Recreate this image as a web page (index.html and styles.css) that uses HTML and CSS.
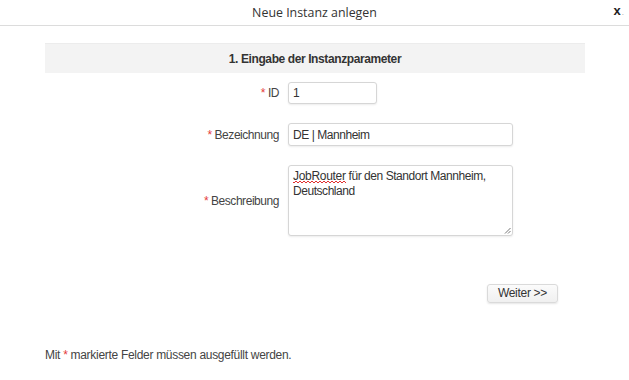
FILE: index.html
```html
<!DOCTYPE html>
<html lang="de">
<head>
<meta charset="utf-8">
<title>Neue Instanz anlegen</title>
<link rel="stylesheet" href="styles.css">
</head>
<body>
<div class="dialog">
  <header class="dlg-head">
    <span class="dlg-title">Neue Instanz anlegen</span>
    <span class="dlg-close">x<span class="dot">.</span></span>
  </header>
  <main class="dlg-body">
    <div class="section-head">1. Eingabe der Instanzparameter</div>
    <form class="form">
      <label class="lbl" for="f-id"><span class="req">*</span> ID</label>
      <div class="ctl"><input id="f-id" class="inp inp-short" type="text" value="1"></div>
      <label class="lbl" for="f-name"><span class="req">*</span> Bezeichnung</label>
      <div class="ctl"><input id="f-name" class="inp inp-long" type="text" value="DE | Mannheim"></div>
      <label class="lbl"><span class="req">*</span> Beschreibung</label>
      <div class="ctl">
        <div class="txt" role="textbox" aria-multiline="true"><span class="spell">JobRouter</span><span> für den Standort Mannheim,</span><br><span>Deutschland</span><svg class="grip" width="7" height="7" viewBox="0 0 7 7"><path d="M6.5 1 L1 6.5 M6.5 4 L4 6.5" stroke="#777" stroke-width="1" fill="none"/></svg></div>
      </div>
    </form>
    <div class="actions"><button class="btn" type="button">Weiter &gt;&gt;</button></div>
    <p class="note">Mit <span class="req">*</span> markierte Felder müssen ausgefüllt werden.</p>
  </main>
</div>
</body>
</html>
```
FILE: styles.css
```css
html, body {
  margin: 0;
  padding: 0;
  background: #fff;
}
body {
  font-family: "Liberation Sans", Arial, sans-serif;
  color: #333;
  width: 629px;
  height: 380px;
  overflow: hidden;
}
.dlg-head {
  height: 25px;
  border-bottom: 1px solid #dcdcdc;
  display: flex;
  align-items: center;
  justify-content: center;
  position: relative;
}
.dlg-title {
  font-family: "Open Sans", sans-serif;
  font-size: 12.4px;
  color: #333;
  line-height: 25px;
}
.dlg-close {
  position: absolute;
  right: 5px;
  top: 3px;
  font-family: "Liberation Sans", Arial, sans-serif;
  font-size: 13px;
  font-weight: bold;
  color: #222;
  line-height: 16px;
}
.dlg-close .dot {
  font-size: 8px;
  font-weight: normal;
  color: #999;
  margin-left: 1px;
}
.dlg-body {
  padding: 17px 44px 0 45px;
}
.section-head {
  height: 30px;
  background: #f3f3f3;
  border-top: 1px solid #ececec;
  box-sizing: border-box;
  display: flex;
  align-items: center;
  justify-content: center;
  font-size: 12px;
  font-weight: bold;
  letter-spacing: -0.4px;
  color: #333;
}
.form {
  margin: 9px 0 0 0;
  display: grid;
  grid-template-columns: 234px auto;
  column-gap: 9px;
  row-gap: 19px;
  align-items: center;
}
.lbl {
  justify-self: end;
  font-size: 12px;
  letter-spacing: -0.45px;
  color: #444;
}
.req {
  color: #e43b3b;
}
.ctl {
  display: flex;
}
.inp, .txt {
  font-family: "Liberation Sans", Arial, sans-serif;
  font-size: 12px;
  letter-spacing: -0.45px;
  color: #333;
  border: 1px solid #d6d6d6;
  border-radius: 3px;
  box-shadow: 0 1px 2px rgba(0,0,0,0.08);
  box-sizing: border-box;
  padding: 0 4px;
  margin: 0;
  background: #fff;
  outline: none;
}
.inp-short {
  width: 89px;
  height: 22px;
}
.inp-long {
  width: 225px;
  height: 23px;
}
.txt {
  position: relative;
  width: 225px;
  height: 71px;
  padding: 3px 4px;
  line-height: 15px;
}
.spell {
  letter-spacing: -0.3px;
  background-image:
    linear-gradient(135deg, transparent 40%, #e03030 40%, #e03030 60%, transparent 60%),
    linear-gradient(45deg, transparent 40%, #e03030 40%, #e03030 60%, transparent 60%);
  background-size: 4px 2px;
  background-position: 0 100%, 2px 100%;
  background-repeat: repeat-x;
}
.grip {
  position: absolute;
  right: 1px;
  bottom: 1px;
}
.actions {
  display: flex;
  justify-content: flex-end;
  padding-right: 27px;
  margin-top: 48px;
}
.btn {
  width: 71px;
  height: 19px;
  font-family: "Liberation Sans", Arial, sans-serif;
  font-size: 12px;
  letter-spacing: -0.3px;
  color: #333;
  background: linear-gradient(#fbfbfb, #f0f0f0);
  border: 1px solid #dadada;
  border-radius: 3px;
  box-shadow: 0 1px 2px rgba(0,0,0,0.1);
  padding: 0;
  line-height: 17px;
}
.note {
  margin: 45px 0 0 0;
  font-size: 12px;
  letter-spacing: -0.3px;
  color: #444;
}
```
